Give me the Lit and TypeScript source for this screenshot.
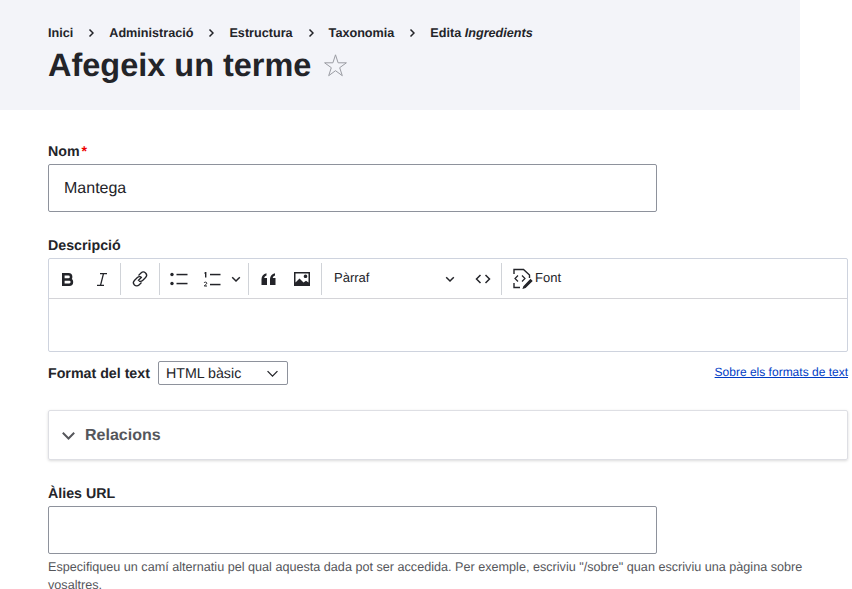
import { LitElement, html, css, svg } from "lit";
import { customElement } from "lit/decorators.js";

const chev = (w: number, sw = 1.5) => svg`<svg width="${w}" height="${w}" viewBox="0 0 10 10" fill="none" stroke="currentColor" stroke-width="${sw}"><path d="M1.200 3.200 5 7l3.800-3.800"/></svg>`;

@customElement("app-root")
export class AppRoot extends LitElement {
  static styles = css`
    :host { display: block; width: 852px; height: 589px; overflow: hidden; background: #fff; font-family: "Liberation Sans", Arial, sans-serif; color: #232429; text-rendering: geometricPrecision; }
    .head { width: 800px; height: 110px; box-sizing: border-box; background: #f3f4f9; padding: 25px 48px 0; }
    .crumbs { display: flex; align-items: center; height: 16px; font-size: 12.64px; font-weight: 700; line-height: 16px; }
    .sep { width: 36px; display: flex; justify-content: center; font-size: 0; }
    .sep svg { display: block; }
    h1 { margin: 4px 0 0; font-size: 32.48px; line-height: 40px; font-weight: 700; display: flex; align-items: center; }
    h1 svg { margin-left: 12px; }
    main { padding: 32px 4px 0 48px; }
    label { display: block; font-size: 14.22px; font-weight: 700; line-height: 18px; padding-top: 1px; margin-bottom: 3px; }
    .req { color: #e00; margin-left: 2px; }
    .input { box-sizing: border-box; width: 609px; height: 48px; border: 1px solid #8e929c; border-radius: 2px; padding: 1px 15px 0; font-size: 16px; line-height: 46px; color: #232429; background: #fff; }
    .f2 { margin-top: 24px; }
    .editor { border: 1px solid #ced3de; border-radius: 2px; height: 94px; box-sizing: border-box; width: 800px; }
    .bar { display: flex; align-items: center; height: 40px; border-bottom: 1px solid #d4d4d8; box-sizing: border-box; color: #232429; padding-left: 1px; }
    .btn { display: flex; align-items: center; justify-content: center; flex: none; height: 34px; }
    .div { width: 1px; height: 32px; background: #d0d3d8; flex: none; }
    .w34 { width: 34px; }
    .w37 { width: 37px; }
    .w38 { width: 38px; }
    .w39 { width: 39px; }
    .w30 { width: 30px; }
    .w28 { width: 28px; }
    .w18 { width: 18px; }
    .ml1 { margin-left: 1px; }
    .ml2 { margin-left: 2px; }
    .ml3 { margin-left: 3px; }
    .ml5 { margin-left: 5px; }
    .para { width: 144px; padding: 0 11px 0 12px; box-sizing: border-box; font-size: 13px; justify-content: space-between; }
    .up { position: relative; top: -1px; }
    .font { font-size: 13px; gap: 2px; padding-left: 10px; }
    .fmt { display: flex; align-items: center; justify-content: space-between; margin-top: 9px; height: 24px; width: 800px; }
    .fmtl { display: flex; align-items: center; font-size: 14.22px; font-weight: 700; gap: 8px; }
    .ftxt { padding-top: 1px; }
    .select { display: flex; align-items: center; justify-content: space-between; box-sizing: border-box; width: 130px; height: 24px; border: 1px solid #8e929c; border-radius: 2px; padding: 0 8px 0 7px; font-size: 14.22px; font-weight: 400; color: #232429; }
    a { font-size: 12px; color: #003cc5; text-decoration: underline; padding-bottom: 2px; }
    .details { box-sizing: border-box; width: 800px; height: 50px; margin-top: 25px; border: 1px solid #dedfe4; border-radius: 2px; box-shadow: 0 1px 3px rgba(0,0,0,.15); display: flex; align-items: center; padding-left: 12px; gap: 9px; font-size: 16px; font-weight: 700; color: #55565b; }
    .f3 { margin-top: 24px; }
    .desc { margin-top: 4px; font-size: 12.64px; line-height: 18px; color: #55565b; width: 800px; }
  `;

  render() {
    return html`
      <div class="head">
        <div class="crumbs">
          <span>Inici</span>${this.sep()}<span>Administració</span>${this.sep()}<span>Estructura</span>${this.sep()}<span>Taxonomia</span>${this.sep()}<span>Edita <i>Ingredients</i></span>
        </div>
        <h1>Afegeix un terme
          <svg width="25" height="25" viewBox="0 0 25 25" fill="none" stroke="#9a9ca3" stroke-width="1"><path d="M12.500 1.800l2.600 8h8.300l-6.700 4.900 2.600 8-6.800-5-6.800 5 2.600-8-6.700-4.900h8.300z"/></svg>
        </h1>
      </div>
      <main>
        <label>Nom<span class="req">*</span></label>
        <div class="input">Mantega</div>
        <div class="f2">
          <label>Descripció</label>
          <div class="editor">
            <div class="bar">
              <div class="btn w34"><svg width="20" height="20" viewBox="-1 0 20 20" fill="none" stroke="currentColor" stroke-width="2.600"><path d="M5.300 5.300h5.200a2.600 2.600 0 0 1 0 5.200H5.300zM5.300 10.500h6a2.600 2.600 0 0 1 0 5.200h-6z"/></svg></div>
              <div class="btn w34"><svg width="20" height="20" viewBox="0 0 20 20" fill="none" stroke="currentColor" stroke-width="1.300"><path d="M9 4.700h7M6 16.300h7M12.500 4.700 9.500 16.300"/></svg></div>
              <div class="div ml2"></div>
              <div class="btn w38"><svg width="20" height="20" viewBox="0 0 20 20" fill="none" stroke="currentColor" stroke-width="1.300"><path d="M8.500 6.500 11 4a3.200 3.200 0 0 1 4.600 4.500l-3 3a3.200 3.200 0 0 1-3.600.6M11.500 13.500 9 16a3.200 3.200 0 0 1-4.600-4.500l3-3a3.200 3.200 0 0 1 3.600-.6M8 11.800l3.800-3.800"/></svg></div>
              <div class="div"></div>
              <div class="btn w37"><svg width="20" height="20" viewBox="0 0 20 20" fill="currentColor"><circle cx="3" cy="5.500" r="1.700"/><circle cx="3" cy="14.500" r="1.700"/><rect x="7.500" y="4.800" width="11" height="1.500"/><rect x="7.500" y="13.800" width="11" height="1.500"/></svg></div>
              <div class="btn w30"><svg width="20" height="20" viewBox="0 0 20 20" fill="currentColor"><rect x="8" y="4.800" width="10.500" height="1.500"/><rect x="8" y="14.800" width="10.500" height="1.500"/><path d="M3 3h1.400v5.500H3V4.500H2z"/><path d="M2 14c.3-1.200 2.800-1.200 2.800.2 0 1-1.800 1.600-2.600 2.800h2.800" fill="none" stroke="currentColor" stroke-width="1"/></svg></div>
              <div class="btn w18">${chev(10)}</div>
              <div class="div ml3"></div>
              <div class="btn w39"><svg width="20" height="20" viewBox="0 0 20 20" fill="currentColor"><path d="M2.500 16v-6c0-3 2-5.300 5-5.800v2.300c-1.400.4-2.200 1.300-2.200 2.500h2.700v7zM11 16v-6c0-3 2-5.300 5-5.800v2.300c-1.400.4-2.200 1.300-2.200 2.500h2.700v7z"/></svg></div>
              <div class="btn w28"><svg width="20" height="20" viewBox="0 0 20 20" fill="currentColor" fill-rule="evenodd"><path d="M2 3h16v14H2zM3.500 4.500v9l4-4 4 4 2.500-1.800 2.500 1.800v-9zM13.500 5.500a1.800 1.800 0 1 0 .01 0z"/></svg></div>
              <div class="div ml5"></div>
              <div class="btn para"><span class="up">Pàrraf</span>${chev(10)}</div>
              <div class="btn w34"><svg width="18" height="18" viewBox="0 0 18 18" fill="none" stroke="currentColor" stroke-width="1.500"><path d="M6.500 5 2.500 9l4 4M11.500 5l4 4-4 4"/></svg></div>
              <div class="div ml1"></div>
              <div class="btn font"><svg width="21" height="21" viewBox="0 0 21 21" fill="none" stroke="currentColor" stroke-width="1.400"><path d="M2 6V1.500h9.500l6 5.500v3M2 15v4.500h6M2 8.500v0"/><path d="M6 7.500 3 10.500l3 3M10 7.500l3 3-3 3" stroke-width="1.200"/><path d="M12 18.500l-.5 1.500 1.700-.5 6.500-6.500-1.200-1.200z" fill="currentColor"/></svg><span class="up">Font</span></div>
            </div>
          </div>
          <div class="fmt">
            <div class="fmtl"><span class="ftxt">Format del text</span> <div class="select"><span class="ftxt">HTML bàsic</span> ${chev(13, 1)}</div></div>
            <a href="#">Sobre els formats de text</a>
          </div>
        </div>
        <div class="details">${chev(15, 1.3)}<span class="ftxt">Relacions</span></div>
        <div class="f3">
          <label>Àlies URL</label>
          <div class="input"></div>
          <div class="desc">Especifiqueu un camí alternatiu pel qual aquesta dada pot ser accedida. Per exemple, escriviu "/sobre" quan escriviu una pàgina sobre vosaltres.</div>
        </div>
      </main>
    `;
  }

  private sep() {
    return html`<span class="sep"><svg width="6" height="10" viewBox="0 0 6 10" fill="none" stroke="#232429" stroke-width="1.500"><path d="M1.500 1.500 5 5 1.500 8.500"/></svg></span>`;
  }
}
